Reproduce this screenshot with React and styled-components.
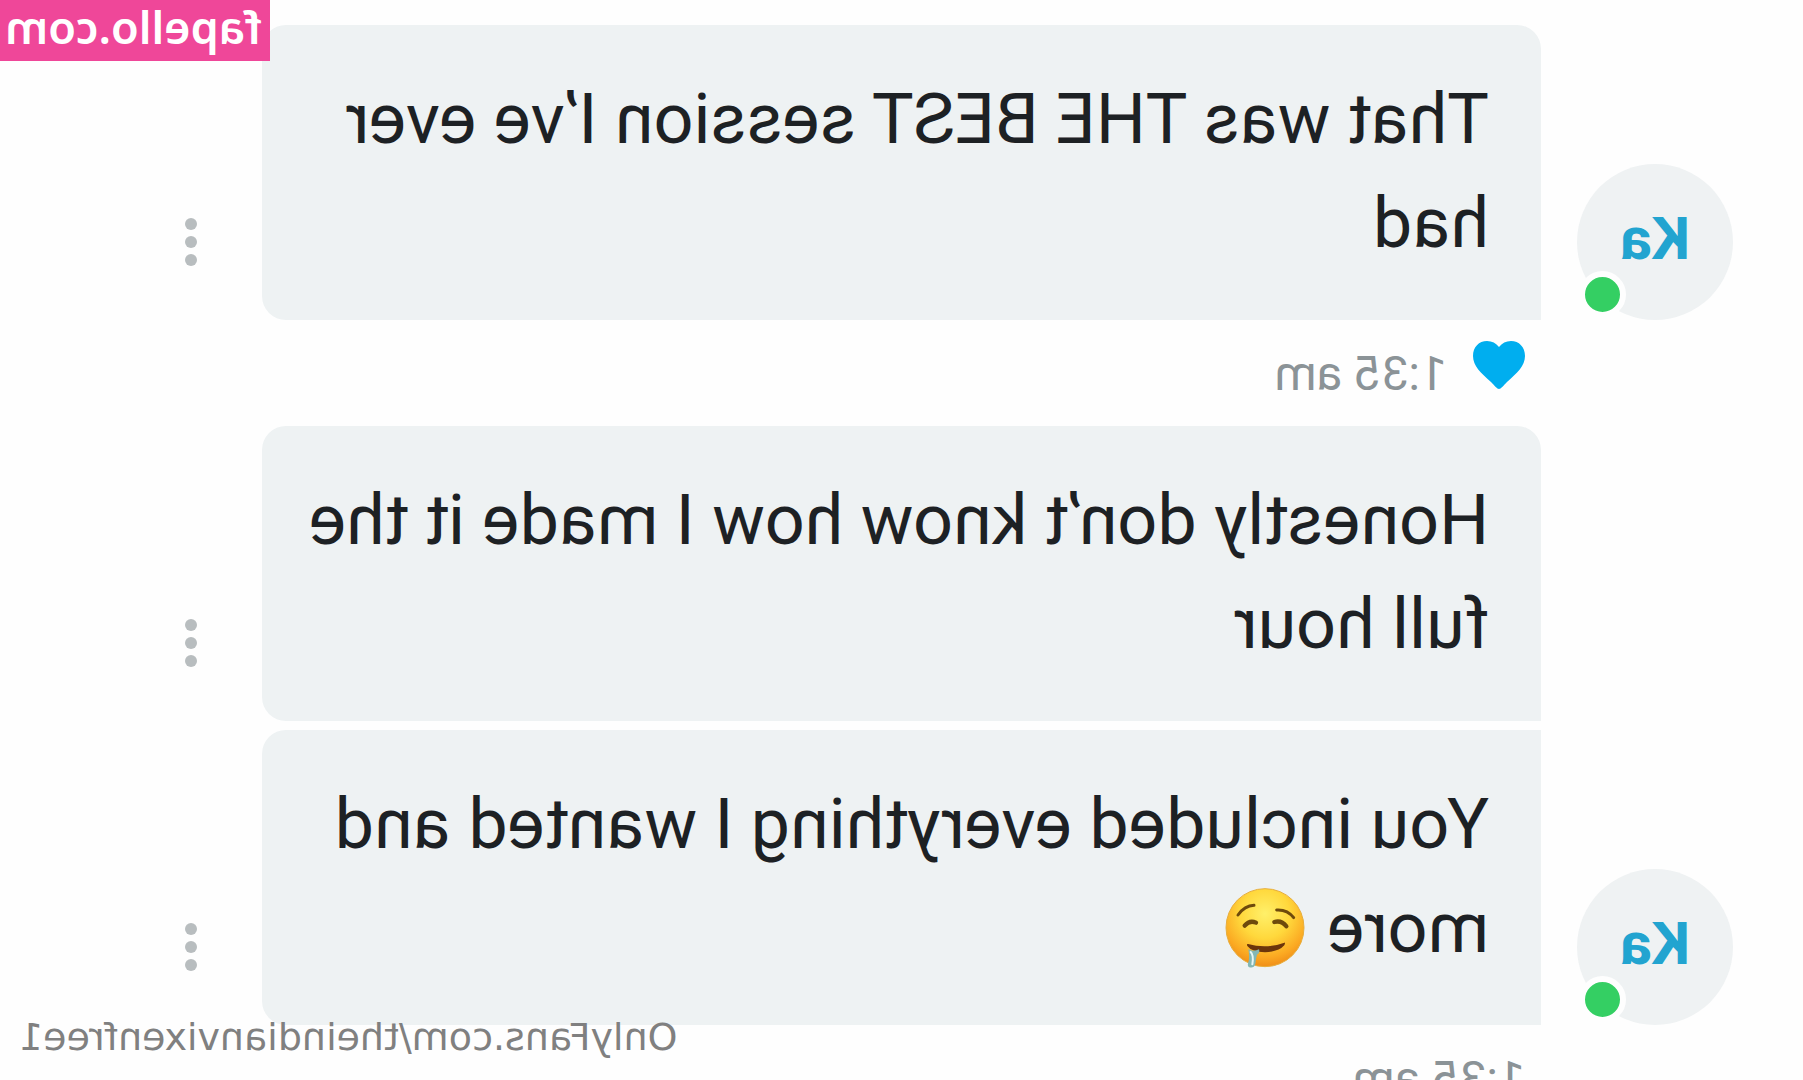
import React from 'react';
import styled, { createGlobalStyle } from 'styled-components';

const GlobalStyle = createGlobalStyle`
  * {
    box-sizing: border-box;
  }

  body {
    margin: 0;
    background: #fefefe;
  }
`;

// The whole conversation is flipped, so everything inside is laid out left to right
const Page = styled.div`
  position: relative;
  height: 100vh;
  overflow: hidden;
  padding: 25px 121px 0 70px;
  background: #fefefe;
  font-family: Roboto, 'Liberation Sans', sans-serif;
  color: #1d2124;
  transform: scaleX(-1);
`;

const Thread = styled.main`
  display: flex;
  flex-direction: column;
`;

const MessageRow = styled.div`
  display: flex;
  align-items: flex-end;
  margin-top: ${(props) => (props.$grouped ? '9px' : '0')};
`;

const AvatarSlot = styled.div`
  position: relative;
  flex: none;
  width: 156px;
  margin-right: 36px;
`;

const Avatar = styled.div`
  display: flex;
  align-items: center;
  justify-content: center;
  height: 156px;
  padding-bottom: 8px;
  border-radius: 50%;
  background: #eff2f3;
  color: #22a4d0;
  font-size: 60px;
  font-weight: 700;
`;

const OnlineBadge = styled.span`
  position: absolute;
  right: 2px;
  bottom: 2px;
  width: 47px;
  height: 47px;
  border: 6px solid #fefefe;
  border-radius: 50%;
  background: #34cf63;
`;

const Bubble = styled.p`
  flex: 1;
  min-width: 0;
  margin: 0;
  padding: 42px 40px 45px 52px;
  border-radius: ${(props) => (props.$grouped ? '0' : '24px')} 24px 24px 0;
  background: #eef2f3;
  font-size: 70px;
  line-height: 104px;
`;

const MenuButton = styled.button`
  display: flex;
  align-items: center;
  justify-content: center;
  flex: none;
  width: 141px;
  height: 156px;
  padding: 0;
  border: none;
  background: none;
  color: #b8bdbf;
  cursor: pointer;
`;

const Meta = styled.div`
  display: flex;
  align-items: flex-start;
  gap: 26px;
  height: 106px;
  padding: 21px 0 0 208px;
`;

const LikeButton = styled.button`
  flex: none;
  width: 52px;
  height: 48px;
  padding: 0;
  border: none;
  background: none;
  color: #00aeef;
  cursor: pointer;

  svg {
    display: block;
  }
`;

const Time = styled.time`
  padding-top: 5px;
  color: #8b9397;
  font-size: 48px;
  line-height: 56px;
`;

const Face = styled.svg`
  width: 80px;
  height: 80px;
  margin-left: 5px;
  vertical-align: -16px;
`;

const SiteTag = styled.div`
  position: absolute;
  top: 0;
  right: 0;
  height: 61px;
  padding: 0 5px 0 8px;
  background: #ef4799;
  color: #fff;
  font-family: 'Noto Sans', sans-serif;
  font-size: 45px;
  font-weight: 600;
  line-height: 54px;
`;

const ProfileTag = styled.div`
  position: absolute;
  right: 19px;
  bottom: 20px;
  color: #808080;
  font-family: 'DejaVu Sans', sans-serif;
  font-size: 38px;
  line-height: 46px;
`;

function DroolingFace() {
  return (
    <Face viewBox="0 0 240 240" role="img" aria-label="Drooling face">
      <defs>
        <radialGradient id="skin" cx="50%" cy="32%" r="70%">
          <stop offset="0" stopColor="#fff06a" />
          <stop offset="0.45" stopColor="#ffd83c" />
          <stop offset="0.8" stopColor="#fba922" />
          <stop offset="1" stopColor="#ee8a16" />
        </radialGradient>
      </defs>
      <circle cx="120" cy="119" r="117" fill="url(#skin)" stroke="#e7ae3c" strokeWidth="3" />
      <g fill="none" stroke="#6e4a0c" strokeLinecap="round">
        <path d="M201 81 Q181 53 153 52" strokeWidth="9" />
        <path d="M85 66 Q53 64 34 89" strokeWidth="9" />
        <path d="M181 113 Q166 95 147 104" strokeWidth="13" />
        <path d="M92 102 Q70 96 56 115" strokeWidth="13" />
      </g>
      <path d="M62 164 Q116 184 171 168 Q176 167 173 174 Q160 192 120 193 Q78 191 62 172 Q58 162 62 164Z" fill="#6c350b" />
      <path d="M170 184 Q154 192 138 184 Q134 194 144 200 Q148 214 149 228 Q154 243 169 237 Q174 232 169 219 Q166 204 170 184Z" fill="#83b7b4" />
      <path d="M163 192 Q153 202 158 229" fill="none" stroke="#e6f7f5" strokeWidth="6" strokeLinecap="round" />
    </Face>
  );
}

function Heart() {
  return (
    <svg width="52" height="48" viewBox="0 0 52 48" fill="currentColor" aria-hidden="true">
      <path d="M26 48C24 48 22 45 18 41C8 32 0 25 0 15C0 6 6 0 14 0C19 0 23 2 26 6C29 2 33 0 38 0C46 0 52 6 52 15C52 25 44 32 34 41C30 45 28 48 26 48Z" />
    </svg>
  );
}

function Message({ children, avatar, grouped }) {
  return (
    <MessageRow $grouped={grouped}>
      <AvatarSlot>
        {avatar && (
          <>
            <Avatar>{avatar}</Avatar>
            <OnlineBadge />
          </>
        )}
      </AvatarSlot>
      <Bubble $grouped={grouped}>{children}</Bubble>
      <MenuButton type="button" aria-label="Message options">
        <svg width="12" height="48" viewBox="0 0 12 48" fill="currentColor" aria-hidden="true">
          <circle cx="6" cy="6" r="6" />
          <circle cx="6" cy="24" r="6" />
          <circle cx="6" cy="42" r="6" />
        </svg>
      </MenuButton>
    </MessageRow>
  );
}

export default function App() {
  return (
    <>
      <GlobalStyle />
      <Page>
        <Thread>
          <Message avatar="Ka">That was THE BEST session I’ve ever had</Message>
          <Meta>
            <LikeButton type="button" aria-label="Like">
              <Heart />
            </LikeButton>
            <Time>1:35 am</Time>
          </Meta>
          <Message>Honestly don’t know how I made it the full hour</Message>
          <Message avatar="Ka" grouped>
            You included everything I wanted and more <DroolingFace />
          </Message>
          <Meta>
            <Time>1:35 am</Time>
          </Meta>
        </Thread>
        <SiteTag>fapello.com</SiteTag>
        <ProfileTag>OnlyFans.com/theindianvixenfree1</ProfileTag>
      </Page>
    </>
  );
}
